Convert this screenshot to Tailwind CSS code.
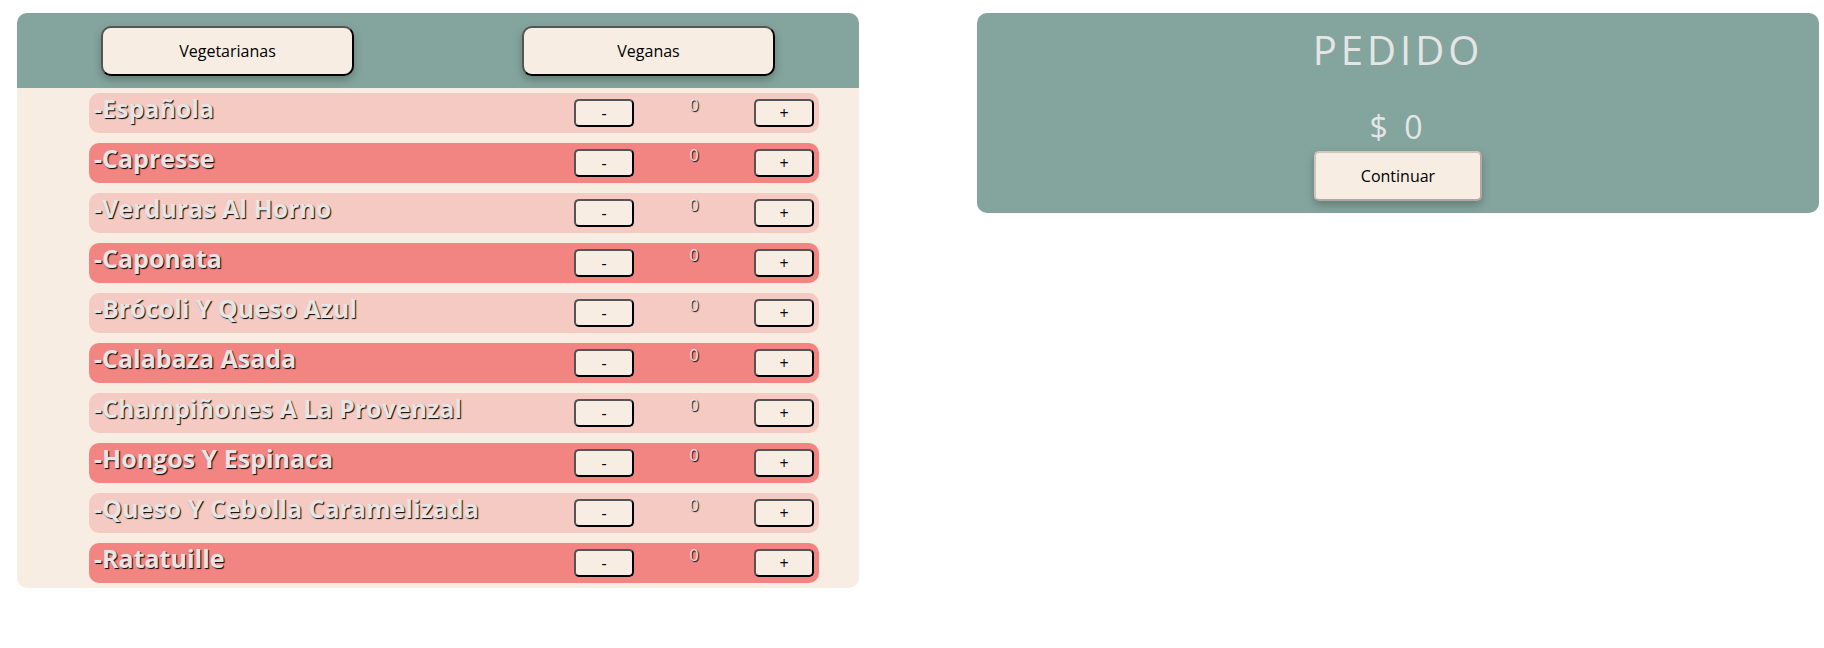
<!DOCTYPE html>
<html lang="es">
<head>
<meta charset="utf-8">
<title>Pedido</title>
<script src="https://cdn.jsdelivr.net/npm/@tailwindcss/browser@4"></script>
</head>
<body class="bg-white font-['Open_Sans',sans-serif] text-base text-black">
<main class="grid grid-cols-2 items-start gap-x-[118px] pt-[13px] pr-[5px] pl-[17px]">
  <section class="overflow-hidden rounded-[10px] bg-[#f7ede2]" aria-label="Menú">
    <div class="flex justify-around bg-[#84a59d] pt-[13px] pb-3">
      <button type="button" class="h-[50px] w-[30%] rounded-[10px] border-2 [border-style:outset] border-black bg-[#f7ede2] shadow-[0_4px_8px_rgba(0,0,0,0.25)]">Vegetarianas</button>
      <button type="button" class="h-[50px] w-[30%] rounded-[10px] border-2 [border-style:outset] border-black bg-[#f7ede2] shadow-[0_4px_8px_rgba(0,0,0,0.25)]">Veganas</button>
    </div>
    <ul id="menu" class="flex flex-col gap-2.5 py-[5px] pr-10 pl-[72px]"></ul>
  </section>
  <section class="flex flex-col items-center rounded-[10px] bg-[#84a59d] pt-[7px] pb-3 text-[#e5e5e5]" aria-label="Pedido">
    <h1 class="text-[40px] leading-[60px] font-medium tracking-[4px]">PEDIDO</h1>
    <p class="mt-6 mb-px text-[32px] leading-[46px] font-medium tracking-[4px]">$ 0</p>
    <button type="button" class="h-[50px] w-[168px] rounded-[5px] border-2 border-t-[#d0c5be] border-r-[#b3a9a2] border-b-[#b3a9a2] border-l-[#d0c5be] bg-[#f7ede2] text-black shadow-[0_4px_8px_rgba(0,0,0,0.25)]">Continuar</button>
  </section>
</main>
<template id="row">
  <li class="flex h-10 rounded-[10px] px-[5px] text-[#e5e5e5] odd:bg-[#f5cac3] even:bg-[#f28482]">
    <h2 class="flex-1 text-[25px] leading-[30px] font-bold text-shadow-[1px_1px_1px_#000000]"></h2>
    <div class="flex gap-[30px]">
      <button type="button" class="mt-1.5 h-7 w-[60px] rounded-[5px] border-2 [border-style:outset] border-black bg-[#f7ede2] text-black leading-6" aria-label="Quitar">-</button>
      <output class="w-[60px] text-center leading-6 text-shadow-[1px_1px_1px_#000000]">0</output>
      <button type="button" class="mt-1.5 h-7 w-[60px] rounded-[5px] border-2 [border-style:outset] border-black bg-[#f7ede2] text-black leading-6" aria-label="Agregar">+</button>
    </div>
  </li>
</template>
<script>
const names = ['Española', 'Capresse', 'Verduras Al Horno', 'Caponata', 'Brócoli Y Queso Azul', 'Calabaza Asada', 'Champiñones A La Provenzal', 'Hongos Y Espinaca', 'Queso Y Cebolla Caramelizada', 'Ratatuille'];
const menu = document.getElementById('menu');
const row = document.getElementById('row');
for (const name of names) {
  const item = row.content.cloneNode(true);
  item.querySelector('h2').textContent = '-' + name;
  menu.append(item);
}
</script>
</body>
</html>
